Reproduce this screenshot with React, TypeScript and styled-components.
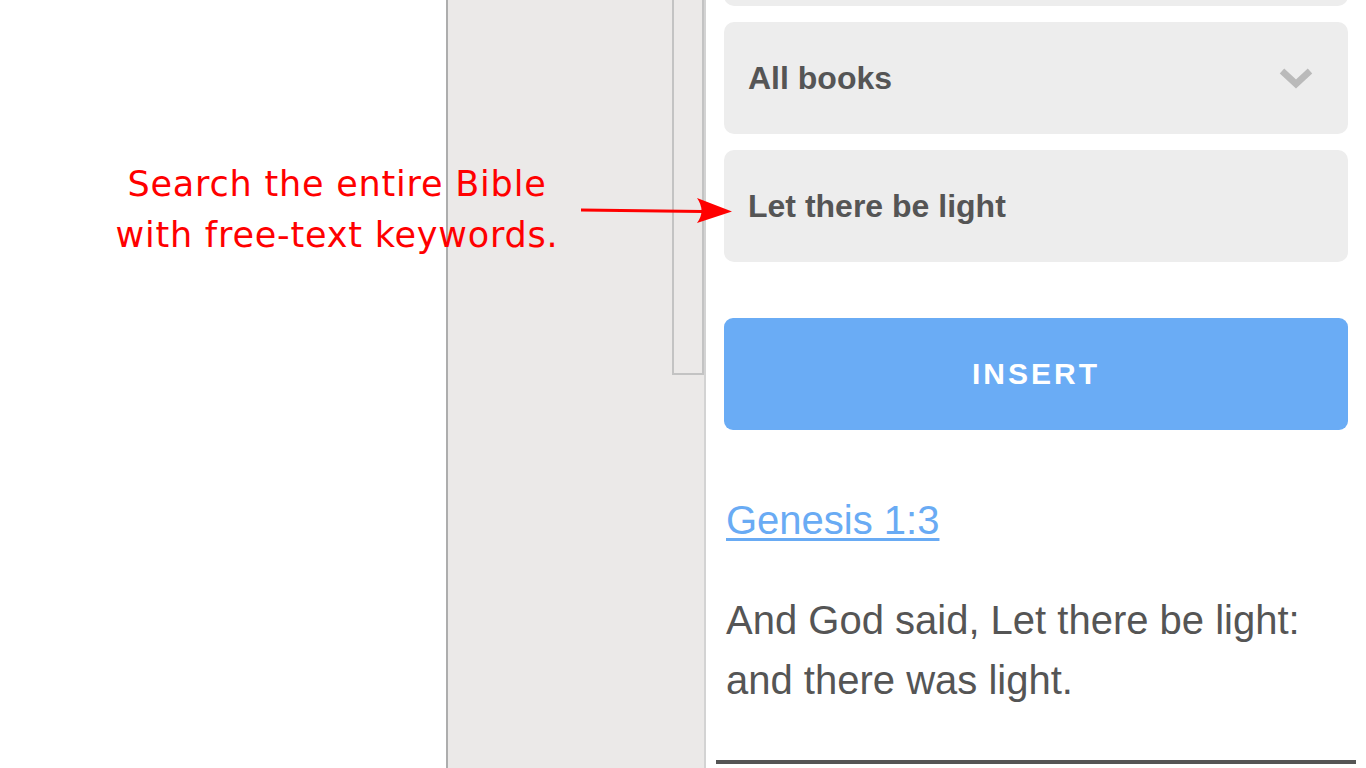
import styled, { createGlobalStyle } from "styled-components";

const Global = createGlobalStyle`
  html, body {
    margin: 0;
    padding: 0;
    background: #fff;
    overflow: hidden;
  }
  body {
    font-family: "Liberation Sans", Arial, sans-serif;
  }
`;

const Page = styled.div`
  position: relative;
  display: flex;
  width: 1366px;
  height: 768px;
  overflow: hidden;
`;

const Blank = styled.div`
  width: 446px;
  flex-shrink: 0;
`;

// grey editor gutter between the document and the sidebar
const Panel = styled.div`
  width: 260px;
  flex-shrink: 0;
  box-sizing: border-box;
  display: flex;
  flex-direction: column;
  align-items: flex-end;
  background: #ebe9e8;
  border-left: 2px solid #adadad;
  border-right: 2px solid #d3d3d3;
`;

const Track = styled.div`
  width: 32px;
  height: 375px;
  box-sizing: border-box;
  border: 2px solid #c3c3c3;
  border-top: none;
`;

const Sidebar = styled.div`
  width: 660px;
  flex-shrink: 0;
  box-sizing: border-box;
  padding: 0 18px;
  overflow: hidden;
`;

const Stack = styled.div`
  display: flex;
  flex-direction: column;
  margin-top: -106px;
`;

const Field = styled.div<{ $gap?: number }>`
  height: 112px;
  margin-top: ${(p) => p.$gap ?? 0}px;
  box-sizing: border-box;
  display: flex;
  align-items: center;
  justify-content: space-between;
  padding: 0 35px 0 24px;
  background: #ededed;
  border-radius: 10px;
  color: #555;
  font-size: 32px;
  font-weight: 700;
`;

const InsertButton = styled.button`
  height: 112px;
  margin-top: 56px;
  border: none;
  border-radius: 9px;
  background: #6aacf5;
  color: #fff;
  font-family: "Liberation Sans", Arial, sans-serif;
  font-size: 30px;
  font-weight: 700;
  letter-spacing: 3px;
  cursor: pointer;
`;

const RefLink = styled.a`
  display: block;
  align-self: flex-start;
  margin-top: 60px;
  padding-left: 2px;
  color: #69abf4;
  font-size: 40px;
  line-height: 60px;
  text-decoration: underline;
  text-decoration-thickness: 3px;
  text-underline-offset: 4px;
`;

const Verse = styled.p`
  margin: 40px 0 0;
  padding-left: 2px;
  color: #555;
  font-size: 40px;
  line-height: 60px;
`;

const Divider = styled.div`
  height: 4px;
  margin: 50px -8px 0;
  background: #555;
`;

// red annotation that sits over the page
const Callout = styled.div`
  position: absolute;
  left: 90px;
  top: 159px;
  width: 494px;
  text-align: center;
  color: #ff0000;
  font-family: "DejaVu Sans", "Liberation Sans", sans-serif;
  font-size: 35px;
  line-height: 51px;
  letter-spacing: 0.8px;
`;

const Arrow = styled.svg`
  position: absolute;
  left: 576px;
  top: 194px;
`;

const Chevron = () => (
  <svg width="34" height="22" viewBox="0 0 34 22">
    <polyline points="3,4 17,17 31,4" fill="none" stroke="#bababa" strokeWidth="6.5" />
  </svg>
);

export default function App() {
  return (
    <Page>
      <Global />
      <Blank />
      <Panel>
        <Track />
      </Panel>
      <Sidebar>
        <Stack>
          <Field />
          <Field $gap={16}>
            All books
            <Chevron />
          </Field>
          <Field $gap={16}>Let there be light</Field>
          <InsertButton>INSERT</InsertButton>
          <RefLink href="#">Genesis 1:3</RefLink>
          <Verse>And God said, Let there be light: and there was light.</Verse>
          <Divider />
        </Stack>
      </Sidebar>
      <Callout>
        Search the entire Bible
        <br />
        with free-text keywords.
      </Callout>
      <Arrow width="160" height="34" viewBox="0 0 160 34">
        <line x1="5" y1="16" x2="126" y2="17.5" stroke="#ff0000" strokeWidth="3" />
        <path d="M121 4 Q130 17 121 29 L156 17.5 Z" fill="#ff0000" />
      </Arrow>
    </Page>
  );
}
